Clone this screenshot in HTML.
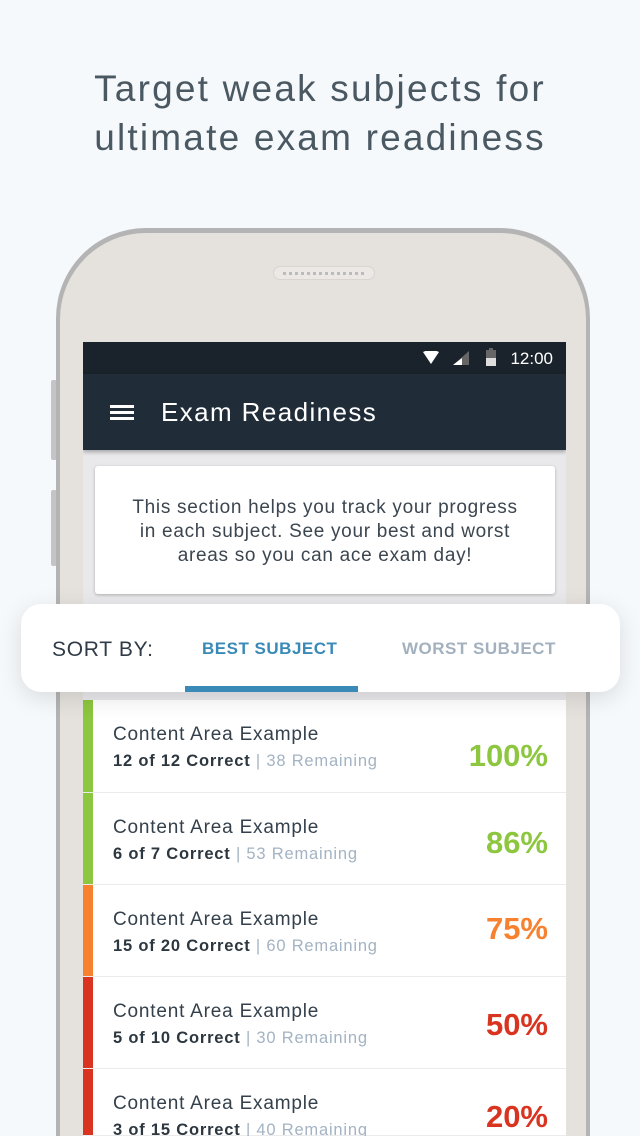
<!DOCTYPE html>
<html style="width:640px;height:1136px;overflow:hidden"><head><style>
*{margin:0;padding:0;box-sizing:border-box}
body{width:640px;height:1136px;overflow:hidden;background:#f6f9fc;font-family:"Liberation Sans",sans-serif;position:relative}
.h{position:absolute;left:0;width:640px;text-align:center;color:#4a5862;font-size:37px;letter-spacing:2.2px}
.phone{position:absolute;left:56px;top:228px;width:534px;height:908px;border-radius:90px 90px 0 0;background:#b4b4b4;overflow:hidden}
.inner{position:absolute;left:4px;top:5px;right:4px;bottom:0;border-radius:86px 86px 0 0;background:#e5e1dd}
.btn{position:absolute;left:51px;width:6px;background:#c4c4c4;border-radius:2px}
.spk{position:absolute;left:273px;top:266px;width:102px;height:14px;border-radius:7px;background:#ebe8e5;border:1px solid #d8d4d0}
.spk:after{content:"";position:absolute;left:9px;right:9px;top:5px;height:3px;background:repeating-linear-gradient(90deg,#bbb 0 3px,transparent 3px 6px)}
.screen{position:absolute;left:83px;top:342px;width:483px;height:794px;overflow:hidden;background:#e9e9ec}
.sb{height:32px;background:#1a232b;color:#fff;font-size:17px;text-align:right;padding:7px 13px 0 0;position:relative}
.tb{height:76px;background:#202c37;color:#fff;font-size:26px;letter-spacing:1.4px;padding:23px 0 0 78px;position:relative;box-shadow:0 2px 4px rgba(0,0,0,.3)}
.ham{position:absolute;left:27px;top:31px;width:24px;height:3px;background:#fff;box-shadow:0 6px 0 #fff,0 12px 0 #fff}
.card{position:absolute;left:12px;top:124px;width:460px;height:128px;background:#fff;border-radius:3px;box-shadow:0 1px 3px rgba(0,0,0,.25);color:#3c4650;font-size:19px;letter-spacing:0.7px;text-align:center;line-height:24px;padding-top:30px}
.sort{position:absolute;left:21px;top:604px;width:599px;height:88px;background:#fff;border-radius:20px;box-shadow:0 6px 24px rgba(0,0,0,.12)}
.row{position:absolute;left:0;width:483px;height:92px;background:#fff;border-bottom:1px solid #ebebeb}
.bar{position:absolute;left:0;top:0;width:10px;height:100%}
.t1{position:absolute;left:30px;top:24px;font-size:19px;letter-spacing:0.8px;color:#34404b}
.t2{position:absolute;left:30px;top:52px;font-size:16.5px;letter-spacing:0.8px;color:#2d3740;font-weight:bold}
.t2 span{color:#a3b3c3;font-weight:normal}
.p{position:absolute;right:18px;top:38px;font-size:31px;font-weight:bold}
</style></head><body>
<div class="h" style="top:68px">Target weak subjects for</div>
<div class="h" style="top:117px">ultimate exam readiness</div>
<div class="btn" style="top:380px;height:80px"></div>
<div class="btn" style="top:490px;height:76px"></div>
<div class="phone"><div class="inner"></div></div>
<div class="spk"></div>
<div class="screen">
<div class="sb">
<svg style="position:absolute;left:340px;top:9px" width="16" height="14"><path d="M0 1 Q8 -3 16 1 L8 13Z" fill="#fff"/></svg>
<svg style="position:absolute;left:370px;top:9px" width="16" height="14"><path d="M16 0 V14 H0Z" fill="#666"/><path d="M9 7 V14 H0Z" fill="#fff"/></svg>
<svg style="position:absolute;left:403px;top:6px" width="10" height="18"><rect x="0" y="2" width="10" height="16" fill="#666"/><rect x="0" y="10" width="10" height="8" fill="#ddd"/><rect x="3" y="0" width="4" height="2" fill="#666"/></svg>
12:00</div>
<div class="tb"><div class="ham"></div>Exam Readiness</div>
<div class="card">This section helps you track your progress<br>in each subject. See your best and worst<br>areas so you can ace exam day!</div>
<div class="row" style="top:358px;height:93px"><div class="bar" style="background:#8dc63f"></div><div class="t1">Content Area Example</div><div class="t2">12 of 12 Correct <span>| 38 Remaining</span></div><div class="p" style="color:#8dc63f">100%</div></div>
<div class="row" style="top:451px"><div class="bar" style="background:#8dc63f"></div><div class="t1">Content Area Example</div><div class="t2">6 of 7 Correct <span>| 53 Remaining</span></div><div class="p" style="color:#8dc63f;top:32px">86%</div></div>
<div class="row" style="top:543px"><div class="bar" style="background:#f7812f"></div><div class="t1">Content Area Example</div><div class="t2">15 of 20 Correct <span>| 60 Remaining</span></div><div class="p" style="color:#f7812f;top:26px">75%</div></div>
<div class="row" style="top:635px"><div class="bar" style="background:#d8341f"></div><div class="t1">Content Area Example</div><div class="t2">5 of 10 Correct <span>| 30 Remaining</span></div><div class="p" style="color:#d8341f;top:30px">50%</div></div>
<div class="row" style="top:727px;height:67px"><div class="bar" style="background:#d8341f"></div><div class="t1">Content Area Example</div><div class="t2">3 of 15 Correct <span>| 40 Remaining</span></div><div class="p" style="color:#d8341f;top:30px">20%</div></div>
</div>
<div class="sort">
<div style="position:absolute;left:31px;top:34px;font-size:21px;letter-spacing:0.7px;color:#2f3b46">SORT BY:</div>
<div style="position:absolute;left:181px;top:35px;font-size:17px;font-weight:bold;color:#3a8ab8;letter-spacing:0.5px">BEST SUBJECT</div>
<div style="position:absolute;left:381px;top:35px;font-size:17px;font-weight:bold;color:#a3b1bf;letter-spacing:0.5px">WORST SUBJECT</div>
<div style="position:absolute;left:164px;top:82px;width:173px;height:6px;background:#3a8ab8"></div>
</div>
</body></html>
